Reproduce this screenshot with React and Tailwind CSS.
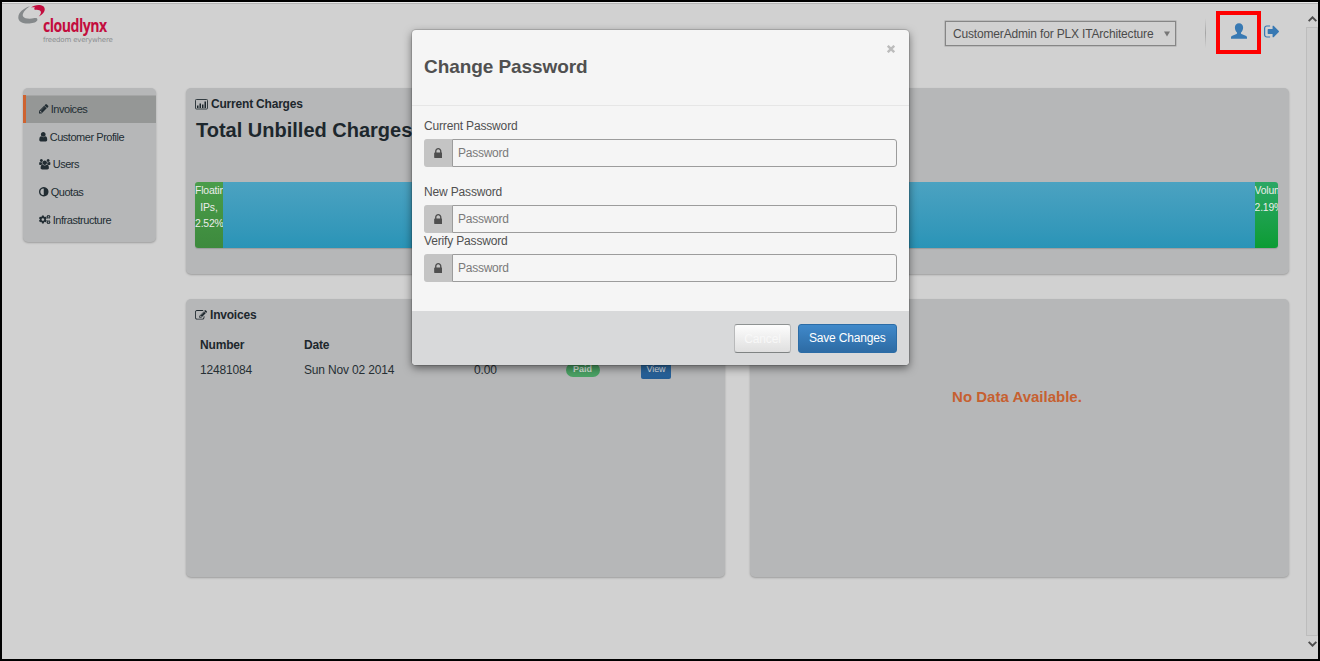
import React from 'react';
import { FaCogs } from 'react-icons/fa';

const PATHS = {
  pencil:
    'M491 1536l91-91-235-235-91 91v107h128v128h107zm523-928q0-22-22-22-10 0-17 7l-542 542q-7 7-7 17 0 22 22 22 10 0 17-7l542-542q7-7 7-17zm-54-192l416 416-832 832h-416v-416zm683 96q0 53-37 90l-166 166-416-416 166-165q36-38 90-38 53 0 91 38l235 234q37 39 37 91z',
  user: 'M1536 1399q0 109-62.5 187t-150.5 78h-854q-88 0-150.5-78t-62.5-187q0-85 8.5-160.5t31.5-152 58.5-131 94-89 134.5-34.5q131 128 313 128t313-128q76 0 134.5 34.5t94 89 58.5 131 31.5 152 8.5 160.5zm-256-887q0 159-112.5 271.5t-271.5 112.5-271.5-112.5-112.5-271.5 112.5-271.5 271.5-112.5 271.5 112.5 112.5 271.5z',
  users:
    'M529 896q-162 5-265 128h-134q-82 0-138-40.5t-56-118.5q0-353 124-353 6 0 43.5 21t97.5 42.5 119 21.5q67 0 133-23-5 37-5 66 0 159 90 292zm1071 637q0 120-73 189.5t-194 69.5h-874q-121 0-194-69.5t-73-189.5q0-53 3.5-103.5t14-109 26.5-108.5 43-97.5 62-81 85.5-53.5 111.5-20q10 0 43 21.5t73 48 107 48 135 21.5 135-21.5 107-48 73-48 43-21.5q61 0 111.5 20t85.5 53.5 62 81 43 97.5 26.5 108.5 14 109 3.5 103.5zm-1024-1277q0 106-75 181t-181 75-181-75-75-181 75-181 181-75 181 75 75 181zm704 384q0 159-112.5 271.5t-271.5 112.5-271.5-112.5-112.5-271.5 112.5-271.5 271.5-112.5 271.5 112.5 112.5 271.5zm576 225q0 78-56 118.5t-138 40.5h-134q-103-123-265-128 90-133 90-292 0-29-5-66 66 23 133 23 59 0 119-21.5t97.5-42.5 43.5-21q124 0 124 353zm-128-609q0 106-75 181t-181 75-181-75-75-181 75-181 181-75 181 75 75 181z',
  adjust:
    'M896 1440v-1088q-148 0-273 73t-198 198-73 273 73 273 198 198 273 73zm768-544q0 209-103 385.5t-279.5 279.5-385.5 103-385.5-103-279.5-279.5-103-385.5 103-385.5 279.5-279.5 385.5-103 385.5 103 279.5 279.5 103 385.5z',
  lock: 'M640 768h512v-192q0-106-75-181t-181-75-181 75-75 181v192zm832 96v576q0 40-28 68t-68 28h-960q-40 0-68-28t-28-68v-576q0-40 28-68t68-28h32v-192q0-184 132-316t316-132 316 132 132 316v192h32q40 0 68 28t28 68z',
  edit: 'M888 1184l116-116-152-152-116 116v56h96v96h56zm440-720q-16-16-33 1l-350 350q-17 17-1 33t33-1l350-350q17-17 1-33zm80 594v190q0 119-84.5 203.5t-203.5 84.5h-832q-119 0-203.5-84.5t-84.5-203.5v-832q0-119 84.5-203.5t203.5-84.5h832q63 0 117 25 15 7 18 23 3 17-9 29l-49 49q-14 14-32 8-23-6-45-6h-832q-66 0-113 47t-47 113v832q0 66 47 113t113 47h832q66 0 113-47t47-113v-126q0-13 9-22l64-64q15-15 35-7t20 29zm-96-738l288 288-672 672h-288v-288zm444 132l-92 92-288-288 92-92q28-28 68-28t68 28l152 152q28 28 28 68t-28 68z',
  signOut:
    'M704 1440q0 4 1 20t.5 26.5-3 23.5-10 19.5-20.5 6.5h-320q-119 0-203.5-84.5t-84.5-203.5v-704q0-119 84.5-203.5t203.5-84.5h320q13 0 22.5 9.5t9.5 22.5q0 4 1 20t.5 26.5-3 23.5-10 19.5-20.5 6.5h-320q-66 0-113 47t-47 113v704q0 66 47 113t113 47h312l11.5 1 11.5 3 8 5.5 7 9 2 13.5zm928-544q0 26-19 45l-544 544q-19 19-45 19t-45-19-19-45v-288h-448q-26 0-45-19t-19-45v-384q0-26 19-45t45-19h448v-288q0-26 19-45t45-19 45 19l544 544q19 19 19 45z',
};

function Icon({ name, box = '0 0 1792 1792', className }) {
  return (
    <svg viewBox={box} className={className} fill="currentColor" aria-hidden="true">
      <path d={PATHS[name]} />
    </svg>
  );
}

function Logo() {
  return (
    <div className="ml-[16px] flex h-[42px] items-start pt-[2px]">
      <svg viewBox="0 0 28 20" className="h-[20px] w-[28px] shrink-0" aria-hidden="true">
        <path
          d="M12 2.200C5 4.200 .6 8.600 .3 13.200c-.3 4.800 5.400 6.800 11.200 6.300 4-.3 7.400-1.500 7.900-3.500.3-1.700-1-2.300-3-1.900-4.300 1-9.700.8-11.300-1.600C3.700 9.800 7 5.400 12 2.200z"
          fill="#85898b"
        />
        <path
          d="M13 3.600C15.500 1.400 19.600.4 23 1.200c3.800.9 4.600 4 3 6.900-1 1.800-3 3.500-5.200 4.400 1.800-2 2.800-4.200 1.700-5.500-1.200-1.300-3.500-.9-5.200-1.300-1.400-.3-1.500-1.300-.2-2-1.300-.5-2.800-.4-4.100-.1z"
          fill="#c30d3e"
        />
      </svg>
      <div className="-ml-[3px] pt-[13px] whitespace-nowrap">
        <div className="origin-left scale-x-[0.83] font-['Open_Sans',sans-serif] text-[17px] leading-[17px] font-bold tracking-[-0.6px] text-[#c30d3e]">
          cloudlynx
        </div>
        <div className="mt-[2px] font-['DejaVu_Sans',sans-serif] text-[7px] leading-[8px] tracking-[-0.18px] text-[#8b8e90]">
          freedom everywhere
        </div>
      </div>
    </div>
  );
}

function Header() {
  return (
    <header className="flex h-[86px] items-start justify-between">
      <Logo />
      <div className="mr-[27px] flex pt-[14px]">
        <div className="mt-[5px] mr-px flex h-[25px] w-[231px] items-center justify-between border border-[#868686] pr-[5px] pl-[7px] text-[12px] tracking-[-0.17px] text-[#4b4b4b] shadow-[0_0_0_0.5px_#a5a5a5]">
          <span className="whitespace-nowrap">CustomerAdmin for PLX ITArchitecture</span>
          <svg viewBox="0 0 6 6" className="h-[6px] w-[6px] fill-[#777]">
            <path d="M0 .5h6L3 5.500z" />
          </svg>
        </div>
        <div className="mt-[2px] ml-[28px] h-[30px] w-px bg-linear-to-b from-[#d1d1d1] via-[#a4a4a4] to-[#d1d1d1]" />
        <svg viewBox="0 0 16 16" className="mt-[7px] ml-[25px] h-[16px] w-[16px] fill-[#3879b3]" aria-hidden="true">
          <path d="M8 .2c2.500 0 4.100 1.700 4.100 4.200 0 1.900-.8 3.800-1.900 4.900-.4.500-.3 1.400.3 1.700l4.200 1.800c.8.400 1.300.9 1.300 1.600v1.300H0v-1.300c0-.7.500-1.200 1.300-1.600L5.500 11c.6-.3.700-1.200.3-1.700C4.700 8.200 3.900 6.300 3.900 4.400 3.900 1.900 5.500.2 8 .2z" />
        </svg>
        <Icon name="signOut" box="64 256 1568 1280" className="mt-[9px] ml-[17px] h-[13px] w-[15px] text-[#3879b3]" />
      </div>
    </header>
  );
}

const NAV = [
  { label: 'Invoices', icon: <Icon name="pencil" box="128 128 1536 1536" className="h-[9.500px] w-[9.500px]" />, active: true },
  { label: 'Customer Profile', icon: <Icon name="user" box="256 128 1280 1536" className="h-[9.500px] w-[8.500px]" /> },
  { label: 'Users', icon: <Icon name="users" box="-64 0 1920 1792" className="h-[10.500px] w-[11.500px]" /> },
  { label: 'Quotas', icon: <Icon name="adjust" box="128 128 1536 1536" className="h-[9.500px] w-[9.500px]" /> },
  { label: 'Infrastructure', icon: <FaCogs className="h-[11px] w-[11.500px]" /> },
];

function Sidebar() {
  return (
    <nav className="h-[154px] w-[133px] shrink-0 rounded-[5px] bg-[#b6b7b8] pt-[7px] shadow-[0_1px_2px_rgba(0,0,0,0.25)]">
      {NAV.map((n) => (
        <div
          key={n.label}
          className={
            n.active
              ? 'flex h-[28px] items-center border-l-3 border-[#ce6330] bg-[#959796] pl-[13px] shadow-[inset_0_1px_0_#a5a6a6]'
              : 'flex h-[27.600px] items-center pl-[16px]'
          }
        >
          <div className="flex items-center gap-[2.200px] text-[11px] leading-[16px] tracking-[-0.46px] whitespace-nowrap text-[#222d33]">
            {n.icon}
            <span>{n.label}</span>
          </div>
        </div>
      ))}
    </nav>
  );
}

function PanelTitle({ icon, children }) {
  return (
    <h2 className="flex h-[16px] items-center gap-[3px] text-[12px] font-bold tracking-[-0.2px] text-[#1d272d]">
      {icon}
      {children}
    </h2>
  );
}

function ChartIcon() {
  return (
    <svg viewBox="0 0 13 11" className="h-[11px] w-[13px]" aria-hidden="true">
      <rect x=".5" y=".5" width="12" height="9.500" rx=".8" fill="none" stroke="#333c41" />
      <path d="M2 6.500h1.500V9H2zM4.500 4.500h1.500V9H4.500zM7 5.500h1.500V9H7zM9.500 2.500h1.500V9H9.500z" fill="#1d272d" />
    </svg>
  );
}

const panel = 'rounded-[5px] bg-[#b6b7b8] shadow-[0_1px_2px_rgba(0,0,0,0.25)] ';

function CurrentCharges() {
  return (
    <section className={panel + 'h-[186px] pt-[8px] pl-[9px]'}>
      <PanelTitle icon={<ChartIcon />}>Current Charges</PanelTitle>
      <h1 className="mt-[6px] ml-px h-[24px] text-[20px] leading-[24px] font-bold text-[#1d272d]">Total Unbilled Charges</h1>
      <div className="mt-[40px] flex h-[66px] w-[1083px] overflow-hidden rounded-[3px] text-center text-[10.400px] leading-[16.700px] tracking-[-0.15px] text-[#ececec] shadow-[0_1px_1px_rgba(0,0,0,0.15)]">
        <div className="w-[28px] overflow-hidden bg-linear-to-b from-[#4a9d4a] to-[#3d8a3d] pt-px">Floating IPs, 2.52%</div>
        <div className="flex-1 bg-linear-to-b from-[#4ba2c1] to-[#2994b7]" />
        <div className="w-[23.500px] overflow-hidden bg-linear-to-b from-[#2ba765] to-[#0a9c33] pt-px">Volumes 2.19%</div>
      </div>
    </section>
  );
}

function Invoices() {
  return (
    <section className={panel + 'h-[278px] w-[539px] pt-[8px] pl-[9px]'}>
      <PanelTitle icon={<Icon name="edit" box="0 128 1792 1536" className="h-[10.500px] w-[12px]" />}>Invoices</PanelTitle>
      <div className="mt-[9px] ml-[5px] text-[12px] tracking-[-0.17px] text-[#262f34]">
        <div className="flex h-[26px] items-center font-bold text-[#1d272d]">
          <span className="w-[104px]">Number</span>
          <span>Date</span>
        </div>
        <div className="flex h-[24px] items-center">
          <span className="w-[104px]">12481084</span>
          <span className="w-[170px]">Sun Nov 02 2014</span>
          <span className="w-[91.500px]">0.00</span>
          <span className="w-[75.500px]">
            <span className="flex h-[14px] w-[34px] items-center justify-center rounded-full bg-[#4aa264] text-[9px] font-bold tracking-normal text-[#d8e6dc]">
              Paid
            </span>
          </span>
          <button className="h-[18px] w-[30px] rounded-[2px] bg-linear-to-b from-[#3272ab] to-[#235c93] text-[9px] tracking-[-0.1px] text-[#e0e6ec]">
            View
          </button>
        </div>
      </div>
    </section>
  );
}

function Field({ label, className = '' }) {
  return (
    <label className={'block ' + className}>
      <span className="block h-[16px] text-[12px] leading-[16px] tracking-[-0.16px] text-[#505050]">{label}</span>
      <span className="mt-[5px] flex h-[28px]">
        <span className="flex w-[28px] items-center justify-center rounded-l-[3px] bg-[#c4c4c4]">
          <Icon name="lock" box="320 128 1152 1408" className="h-[10px] w-[8.500px] text-[#4f4f4f]" />
        </span>
        <input
          placeholder="Password"
          className="min-w-0 flex-1 rounded-r-[3px] border border-[#9c9c9c] bg-[#f5f5f5] pl-[5px] text-[12px] tracking-[-0.25px] outline-none placeholder:text-[#7a7a7a]"
        />
      </span>
    </label>
  );
}

function ChangePassword() {
  return (
    <div className="absolute inset-0 flex items-start justify-center pt-[28px] pl-px">
      <div
        role="dialog"
        className="h-[335px] w-[497px] overflow-hidden rounded-[4px] bg-[#f5f5f5] shadow-[0_3px_9px_rgba(0,0,0,0.5),0_0_0_1px_rgba(0,0,0,0.12)]"
      >
        <div className="flex h-[76px] justify-between border-b border-[#e6e6e6] px-[12px]">
          <h3 className="pt-[26px] text-[19px] leading-[22px] font-bold tracking-[-0.08px] text-[#505050]">Change Password</h3>
          <svg viewBox="0 0 8 8" className="mt-[15px] mr-[2px] h-[8px] w-[8px]" aria-hidden="true">
            <path d="M.8.800l6.400 6.400M7.200.800L.8 7.200" stroke="#bcbcbc" strokeWidth="2.400" />
          </svg>
        </div>
        <div className="h-[205px] px-[12px] pt-[12px]">
          <Field label="Current Password" />
          <Field label="New Password" className="mt-[17px]" />
          <Field label="Verify Password" />
        </div>
        <div className="flex h-[54px] justify-end gap-[7px] bg-[#d8d9da] pt-[13px] pr-[12.500px] text-[12px] tracking-[-0.18px]">
          <button className="h-[29px] w-[57px] rounded-[3px] border border-[#b8b9ba] border-t-[#8e9292] border-b-[#7f8383] bg-linear-to-b from-[#fdfdfd] to-[#dfdfdf] text-[#f8f8f8]">
            Cancel
          </button>
          <button className="h-[28.500px] w-[98.500px] rounded-[3px] border border-[#2b6ca6] bg-linear-to-b from-[#4089ca] to-[#2d6ba4] text-white">
            Save Changes
          </button>
        </div>
      </div>
    </div>
  );
}

function Scrollbar() {
  return (
    <div className="flex w-[12px] flex-col items-center pt-[14px] pb-[12px]">
      <svg viewBox="0 0 8 5" className="h-[6px] w-[9px]" fill="none" stroke="#4c4c4c" strokeWidth="1.700">
        <path d="M.6 4.400L4 1l3.400 3.400" />
      </svg>
      <div className="mt-[5px] w-full flex-1 border border-[#bdbdbd] bg-[#cdcdcd]" />
      <svg viewBox="0 0 8 5" className="mt-[5px] h-[6px] w-[9px]" fill="none" stroke="#4c4c4c" strokeWidth="1.700">
        <path d="M.6.600L4 4l3.400-3.400" />
      </svg>
    </div>
  );
}

export default function App() {
  return (
    <div className="relative flex h-[661px] w-[1320px] overflow-hidden border-2 border-black bg-[#d1d1d1] font-['Liberation_Sans',Arial,sans-serif] shadow-[inset_0_1px_0_#e8e8e8,inset_0_2px_0_#b5b5b5]">
      <div className="min-w-0 flex-1">
        <Header />
        <div className="flex gap-[30px] pl-[21px]">
          <Sidebar />
          <main className="w-[1103px]">
            <CurrentCharges />
            <div className="mt-[25px] flex justify-between">
              <Invoices />
              <section className={panel + 'h-[278px] w-[539px] pt-[88px] pr-[5px] text-center text-[15px] leading-[20px] font-bold text-[#c66030]'}>
                No Data Available.
              </section>
            </div>
          </main>
        </div>
      </div>
      <Scrollbar />
      <ChangePassword />
      <div className="absolute top-[9px] left-[1214px] h-[43px] w-[45px] border-4 border-[#fe0000]" />
    </div>
  );
}
